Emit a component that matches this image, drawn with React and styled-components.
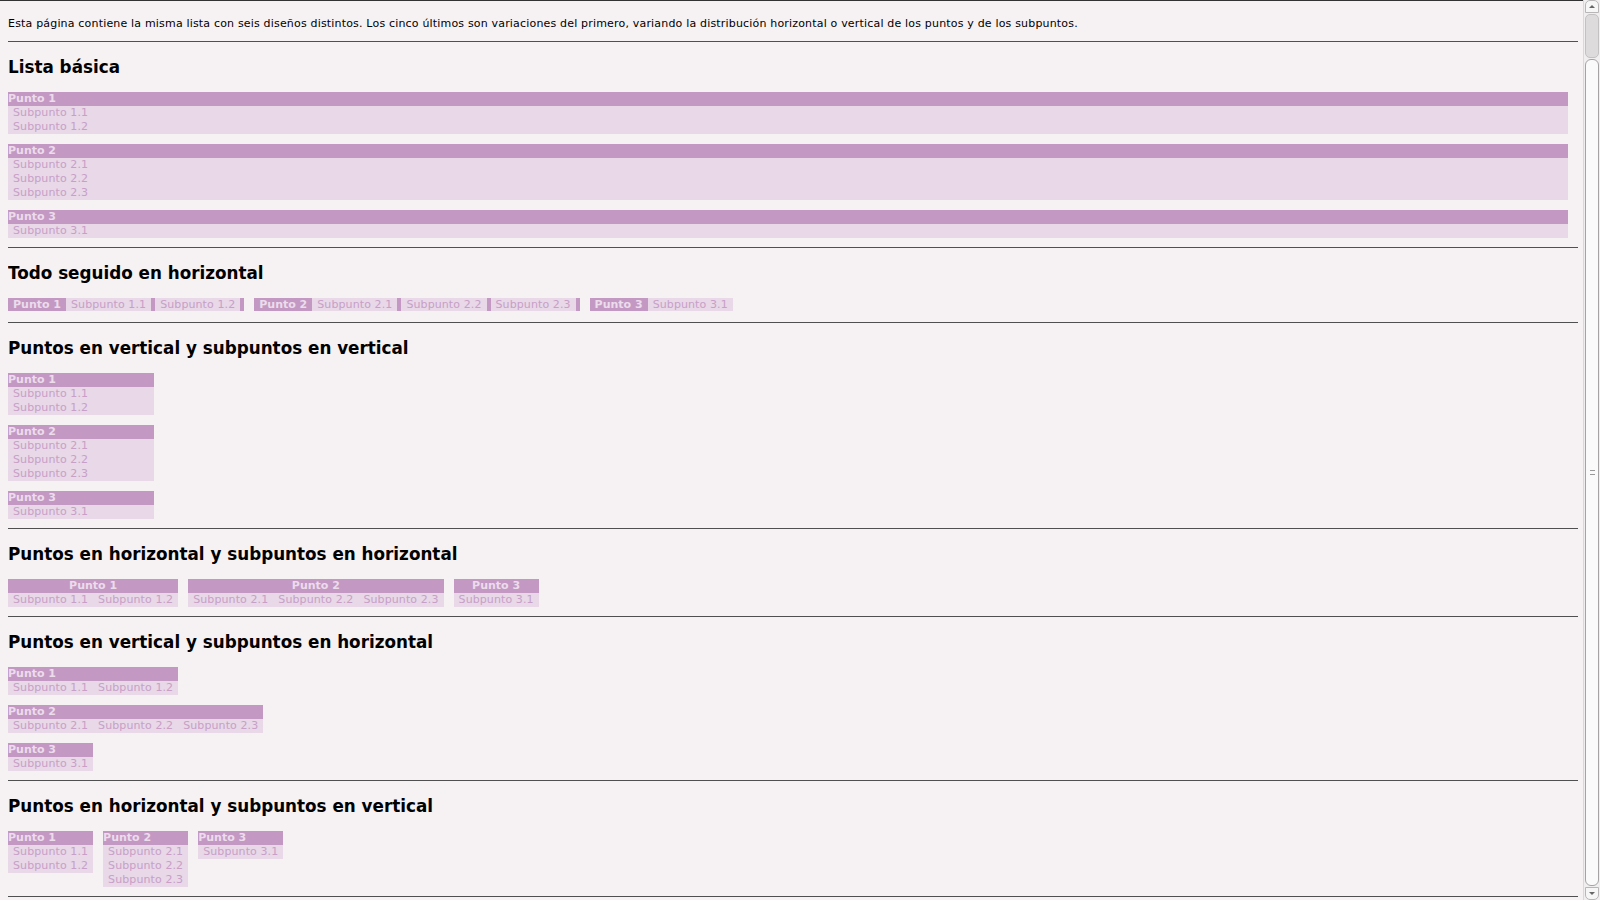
import React from "react";
import styled, { createGlobalStyle, css } from "styled-components";

const puntos = [
  { label: "Punto 1", subs: ["Subpunto 1.1", "Subpunto 1.2"] },
  { label: "Punto 2", subs: ["Subpunto 2.1", "Subpunto 2.2", "Subpunto 2.3"] },
  { label: "Punto 3", subs: ["Subpunto 3.1"] },
];

const GlobalStyle = createGlobalStyle`
  html {
    background: #f6f1f3;
    border-top: 1px solid #333;
  }
  body {
    margin: 8px 22px 8px 8px;
    font-family: "DejaVu Sans", "Liberation Sans", sans-serif;
    font-size: 11px;
    line-height: 14px;
    color: #000;
  }
`;

const Intro = styled.p`
  margin: 8px 0 10px;
  letter-spacing: 0.18px;
`;

const Section = styled.section`
  border-top: 1px solid #505050;
  padding-top: 15px;
`;

const Title = styled.h2`
  margin: 0 0 15px;
  font-size: 16.8px;
  line-height: 20px;
  font-weight: bold;
`;

// lista de puntos (contenedor)
const List = styled.div`
  display: flex;
  flex-direction: ${(p) => (p.$row ? "row" : "column")};
  align-items: ${(p) => (p.$stretch ? "stretch" : "flex-start")};
  gap: 10px;
  margin: 0 ${(p) => (p.$fill ? "10px" : "0")} 9px 0;
  width: ${(p) => p.$width || "auto"};
  height: ${(p) => p.$height || "auto"};
`;

const Group = styled.div`
  display: flex;
  flex-direction: ${(p) => (p.$inline ? "row" : "column")};
  background: ${(p) => (p.$inline ? "#c399c3" : "transparent")};
`;

const Label = styled.div`
  background: #c399c3;
  color: #ecdcec;
  font-weight: bold;
  line-height: ${(p) => (p.$inline ? "13px" : "14px")};
  padding: ${(p) => (p.$inline ? "0 5px" : "0")};
  text-align: ${(p) => (p.$center ? "center" : "left")};
`;

const Subs = styled.div`
  display: flex;
  flex-direction: ${(p) => (p.$row ? "row" : "column")};
  background: #e8d8e8;
`;

const Sub = styled.div`
  background: #e8d8e8;
  color: #c79fc7;
  white-space: nowrap;
  line-height: 14px;
  letter-spacing: 0.1px;
  padding: 0 5px;
  ${(p) =>
    p.$inline &&
    css`
      line-height: 13px;
      margin-right: ${p.$last ? "0" : "4px"};
    `}
`;

// barra de desplazamiento dibujada
const ScrollBar = styled.div`
  position: fixed;
  top: 0;
  right: 0;
  bottom: 0;
  width: 14px;
  display: flex;
  flex-direction: column;
  gap: 1px;
  padding: 0 1px;
  background: #f1eef0;
  border-left: 1px solid #dcd8da;
`;

const Arrow = styled.div`
  height: 11px;
  flex: none;
  border: 1px solid #b9b6b8;
  border-radius: ${(p) => (p.$down ? "0 0 5px 5px" : "5px 5px 0 0")};
  background: #f7f6f7;
  display: flex;
  align-items: center;
  justify-content: center;
  &::after {
    content: "";
    border-left: 3px solid transparent;
    border-right: 3px solid transparent;
    ${(p) =>
      p.$down
        ? "border-top: 3px solid #666;"
        : "border-bottom: 3px solid #666;"}
  }
`;

const Track = styled.div`
  height: 42px;
  flex: none;
  border: 1px solid #c4c1c3;
  border-radius: 5px;
  background: #dedbdd;
`;

const Thumb = styled.div`
  flex: 1;
  border: 1px solid #a6a3a5;
  border-radius: 6px;
  background: #fbfafb;
  display: flex;
  align-items: center;
  justify-content: center;
  &::after {
    content: "";
    width: 5px;
    height: 5px;
    border-top: 1px solid #999;
    border-bottom: 1px solid #999;
    box-sizing: border-box;
  }
`;

const Basic = ({ width }) => (
  <List $stretch $fill={!width} $width={width}>
    {puntos.map((p) => (
      <Group key={p.label}>
        <Label>{p.label}</Label>
        <Subs>
          {p.subs.map((s) => (
            <Sub key={s}>{s}</Sub>
          ))}
        </Subs>
      </Group>
    ))}
  </List>
);

const Seguido = () => (
  <List $row $height="15px">
    {puntos.map((p, i) => (
      <Group key={p.label} $inline>
        <Label $inline>{p.label}</Label>
        {p.subs.map((s) => (
          <Sub key={s} $inline $last={i === puntos.length - 1}>
            {s}
          </Sub>
        ))}
      </Group>
    ))}
  </List>
);

const Grid = ({ row, subsRow, center }) => (
  <List $row={row}>
    {puntos.map((p) => (
      <Group key={p.label}>
        <Label $center={center}>{p.label}</Label>
        <Subs $row={subsRow}>
          {p.subs.map((s) => (
            <Sub key={s}>{s}</Sub>
          ))}
        </Subs>
      </Group>
    ))}
  </List>
);

export default function App() {
  return (
    <>
      <GlobalStyle />
      <Intro>
        Esta página contiene la misma lista con seis diseños distintos. Los
        cinco últimos son variaciones del primero, variando la distribución
        horizontal o vertical de los puntos y de los subpuntos.
      </Intro>
      <Section>
        <Title>Lista básica</Title>
        <Basic />
      </Section>
      <Section>
        <Title>Todo seguido en horizontal</Title>
        <Seguido />
      </Section>
      <Section>
        <Title>Puntos en vertical y subpuntos en vertical</Title>
        <Basic width="146px" />
      </Section>
      <Section>
        <Title>Puntos en horizontal y subpuntos en horizontal</Title>
        <Grid row subsRow center />
      </Section>
      <Section>
        <Title>Puntos en vertical y subpuntos en horizontal</Title>
        <Grid subsRow />
      </Section>
      <Section>
        <Title>Puntos en horizontal y subpuntos en vertical</Title>
        <Grid row />
      </Section>
      <Section />
      <ScrollBar>
        <Arrow />
        <Track />
        <Thumb />
        <Arrow $down />
      </ScrollBar>
    </>
  );
}
